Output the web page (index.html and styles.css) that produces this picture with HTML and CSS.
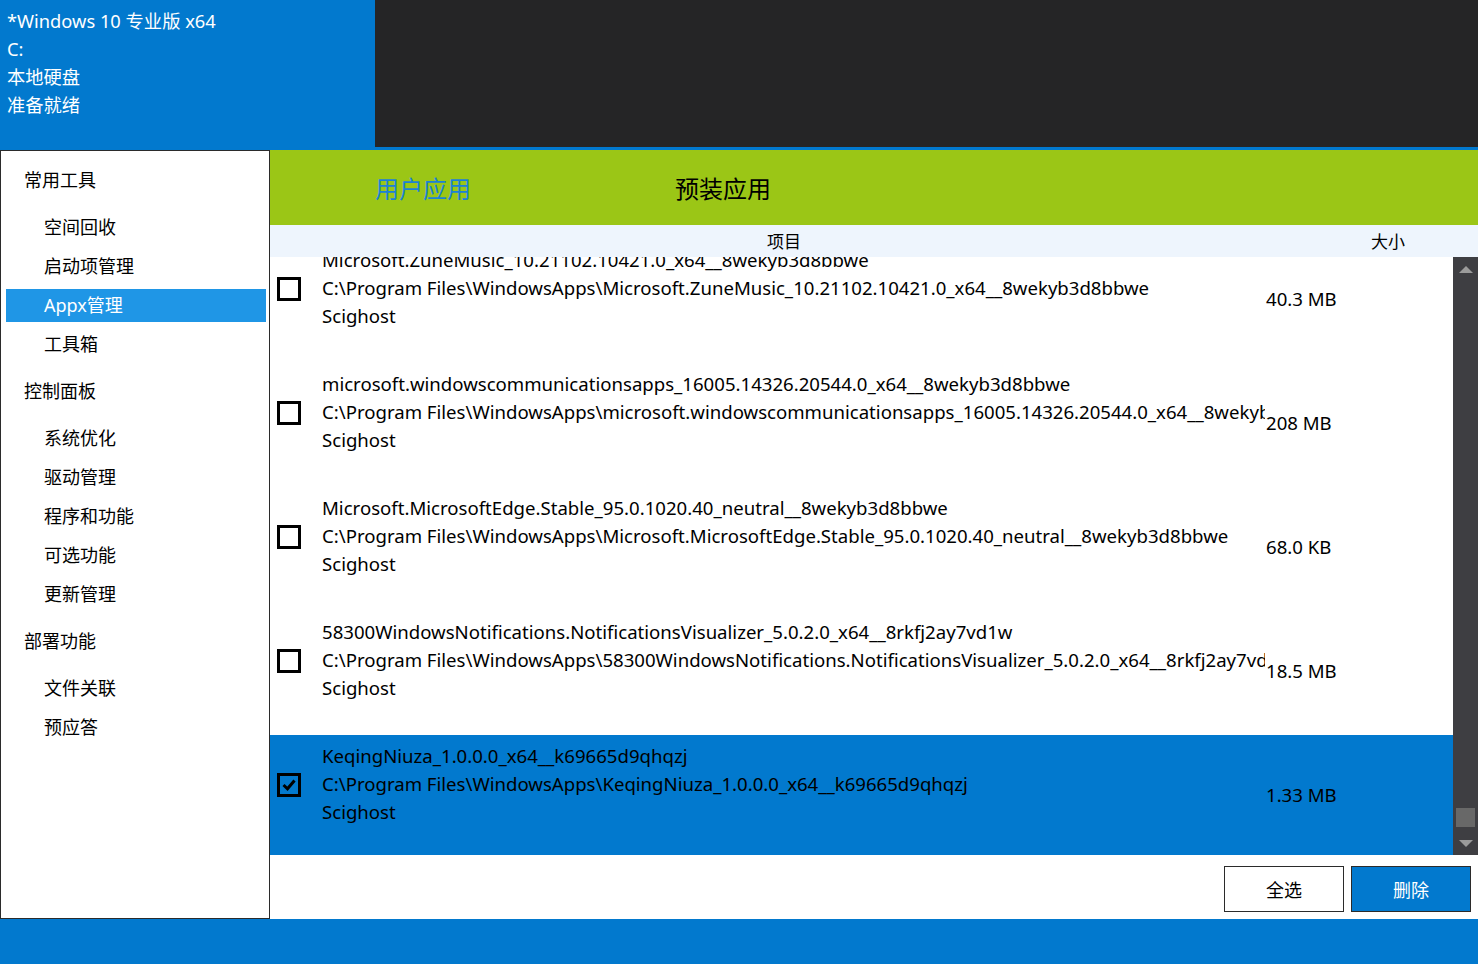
FILE: index.html
```html
<!DOCTYPE html>
<html lang="zh-CN">
<head>
<meta charset="utf-8">
<title>Appx管理</title>
<link rel="stylesheet" href="styles.css">
</head>
<body>
<div class="top">
  <div class="info-panel">
    <div>*Windows 10 专业版 x64</div>
    <div>C:</div>
    <div>本地硬盘</div>
    <div>准备就绪</div>
  </div>
  <div class="dark-panel"></div>
</div>
<div class="main">
  <nav class="sidebar">
    <div class="group">
      <div class="group-title">常用工具</div>
      <div class="items">
        <div class="item">空间回收</div>
        <div class="item">启动项管理</div>
        <div class="item active">Appx管理</div>
        <div class="item">工具箱</div>
      </div>
    </div>
    <div class="group">
      <div class="group-title">控制面板</div>
      <div class="items">
        <div class="item">系统优化</div>
        <div class="item">驱动管理</div>
        <div class="item">程序和功能</div>
        <div class="item">可选功能</div>
        <div class="item">更新管理</div>
      </div>
    </div>
    <div class="group">
      <div class="group-title">部署功能</div>
      <div class="items">
        <div class="item">文件关联</div>
        <div class="item">预应答</div>
      </div>
    </div>
  </nav>
  <section class="content">
    <div class="tabs">
      <div class="tab tab-active">用户应用</div>
      <div class="tab">预装应用</div>
    </div>
    <div class="col-header">
      <div class="col-item">项目</div>
      <div class="col-size">大小</div>
    </div>
    <div class="list-wrap">
      <div class="list">
        <div class="list-inner">
          <div class="row">
            <span class="check"></span>
            <div class="text">
              <div>Microsoft.ZuneMusic_10.21102.10421.0_x64__8wekyb3d8bbwe</div>
              <div>C:\Program Files\WindowsApps\Microsoft.ZuneMusic_10.21102.10421.0_x64__8wekyb3d8bbwe</div>
              <div>Scighost</div>
            </div>
            <div class="size">40.3 MB</div>
          </div>
          <div class="row">
            <span class="check"></span>
            <div class="text">
              <div>microsoft.windowscommunicationsapps_16005.14326.20544.0_x64__8wekyb3d8bbwe</div>
              <div>C:\Program Files\WindowsApps\microsoft.windowscommunicationsapps_16005.14326.20544.0_x64__8wekyb3d8bbwe</div>
              <div>Scighost</div>
            </div>
            <div class="size">208 MB</div>
          </div>
          <div class="row">
            <span class="check"></span>
            <div class="text">
              <div>Microsoft.MicrosoftEdge.Stable_95.0.1020.40_neutral__8wekyb3d8bbwe</div>
              <div>C:\Program Files\WindowsApps\Microsoft.MicrosoftEdge.Stable_95.0.1020.40_neutral__8wekyb3d8bbwe</div>
              <div>Scighost</div>
            </div>
            <div class="size">68.0 KB</div>
          </div>
          <div class="row">
            <span class="check"></span>
            <div class="text">
              <div>58300WindowsNotifications.NotificationsVisualizer_5.0.2.0_x64__8rkfj2ay7vd1w</div>
              <div>C:\Program Files\WindowsApps\58300WindowsNotifications.NotificationsVisualizer_5.0.2.0_x64__8rkfj2ay7vd1w</div>
              <div>Scighost</div>
            </div>
            <div class="size">18.5 MB</div>
          </div>
          <div class="row selected">
            <span class="check checked"><svg viewBox="0 0 18 18" width="18" height="18"><path d="M3.5 9 L7.5 12.8 L14.5 4.5" fill="none" stroke="#000" stroke-width="3"/></svg></span>
            <div class="text">
              <div>KeqingNiuza_1.0.0.0_x64__k69665d9qhqzj</div>
              <div>C:\Program Files\WindowsApps\KeqingNiuza_1.0.0.0_x64__k69665d9qhqzj</div>
              <div>Scighost</div>
            </div>
            <div class="size">1.33 MB</div>
          </div>
        </div>
      </div>
      <div class="scrollbar">
        <div class="arrow-up"></div>
        <div class="track"><div class="thumb"></div></div>
        <div class="arrow-down"></div>
      </div>
    </div>
    <div class="footer">
      <button class="btn">全选</button>
      <button class="btn btn-primary">删除</button>
    </div>
  </section>
</div>
</body>
</html>
```
FILE: styles.css
```css
* { box-sizing: border-box; }
html, body { margin: 0; padding: 0; }
body {
  width: 1478px;
  height: 964px;
  overflow: hidden;
  background: #0279ce;
  font-family: "Noto Sans", "Noto Sans CJK SC", sans-serif;
  color: #000;
}
.top {
  display: flex;
  height: 147px;
}
.info-panel {
  width: 375px;
  padding: 7px 0 0 7px;
  color: #fff;
  font-size: 18.3px;
  line-height: 28px;
}
.dark-panel {
  flex: 1;
  background: #252526;
}
.main {
  display: flex;
  margin-top: 3px;
  height: 769px;
}
.sidebar {
  width: 270px;
  background: #fff;
  border: 1px solid #2b2b2b;
  padding-top: 13px;
  font-size: 18px;
}
.group-title {
  height: 33px;
  line-height: 33px;
  padding-left: 23px;
  margin-bottom: 14px;
}
.items {
  display: flex;
  flex-direction: column;
  gap: 6px;
  margin-bottom: 14px;
}
.item {
  height: 33px;
  line-height: 33px;
  margin: 0 3px 0 5px;
  padding-left: 38px;
}
.item.active {
  background: #1f96e6;
  color: #fff;
}
.content {
  flex: 1;
  display: flex;
  flex-direction: column;
  background: #fff;
}
.tabs {
  height: 75px;
  background: #9bc616;
  display: flex;
  padding-left: 3px;
}
.tab {
  width: 300px;
  text-align: center;
  line-height: 75px;
  font-size: 24px;
  font-family: "Noto Sans CJK SC", sans-serif;
}
.tab-active { color: #1b82d4; }
.col-header {
  height: 32px;
  background: #eef5fd;
  display: flex;
  font-size: 17px;
  line-height: 33px;
}
.col-item { width: 1028px; text-align: center; }
.col-size { flex: 1; text-align: center; }
.list-wrap {
  height: 598px;
  display: flex;
}
.list {
  flex: 1;
  overflow: hidden;
}
.list-inner { margin-top: -18px; }
.row {
  height: 124px;
  display: flex;
  padding-top: 7px;
  font-size: 18.6px;
  line-height: 28px;
}
.row.selected { background: #0279ce; }
.check {
  width: 24px;
  height: 24px;
  border: 3px solid #000;
  margin: 31px 21px 0 7px;
  flex: none;
  display: flex;
  align-items: center;
  justify-content: center;
}
.text {
  width: 943px;
  overflow: hidden;
  white-space: nowrap;
  flex: none;
}
.size {
  padding-top: 39px;
  margin-left: 1px;
}
.scrollbar {
  width: 25px;
  background: #3e3e42;
  display: flex;
  flex-direction: column;
  align-items: center;
  padding: 9px 0 8px;
}
.arrow-up {
  width: 0; height: 0;
  border-left: 7px solid transparent;
  border-right: 7px solid transparent;
  border-bottom: 7px solid #9b9b9b;
  margin-left: 1px;
}
.track {
  flex: 1;
  display: flex;
  flex-direction: column;
  justify-content: flex-end;
  padding-bottom: 13px;
}
.thumb {
  width: 19px;
  height: 19px;
  background: #686868;
}
.arrow-down {
  width: 0; height: 0;
  border-left: 7px solid transparent;
  border-right: 7px solid transparent;
  border-top: 7px solid #9b9b9b;
  margin-left: 1px;
}
.footer {
  height: 64px;
  display: flex;
  justify-content: flex-end;
  gap: 7px;
  padding: 11px 7px 7px 0;
}
.btn {
  width: 120px;
  height: 46px;
  border: 1px solid #2b2b2b;
  background: #fff;
  font-size: 18px;
  font-family: "Noto Sans CJK SC", sans-serif;
  color: #000;
  padding: 0;
}
.btn-primary {
  background: #0279ce;
  color: #fff;
}
```
